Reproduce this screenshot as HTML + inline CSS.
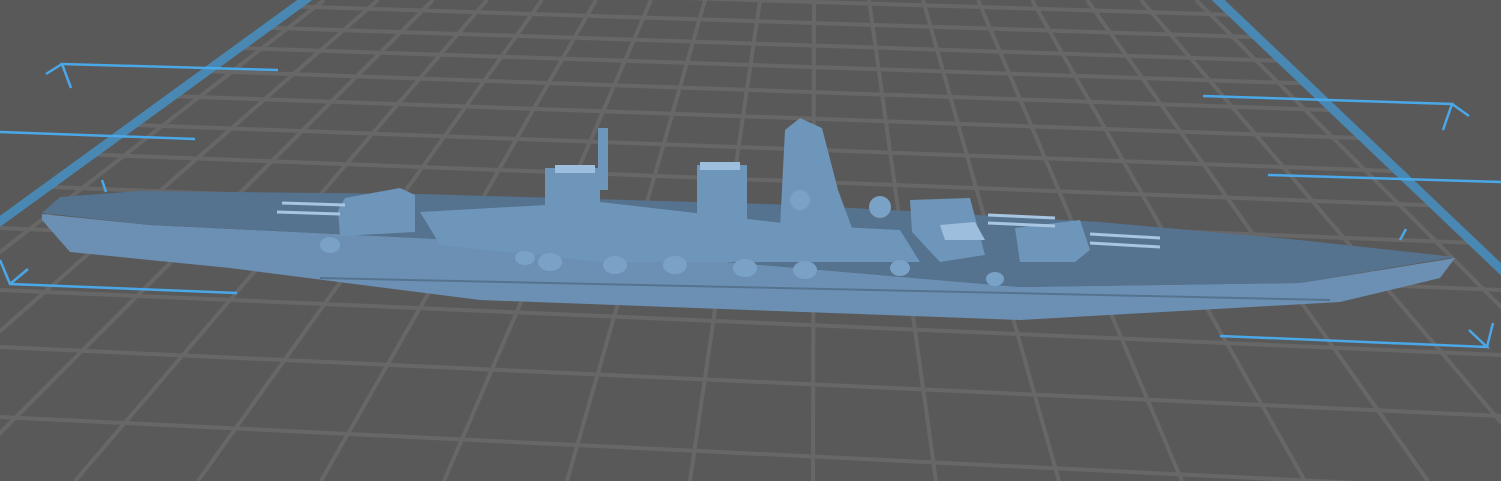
<!DOCTYPE html>
<html><head><style>html,body{margin:0;padding:0;background:#595959;}svg{display:block}</style></head><body>
<svg width="1501" height="481" viewBox="0 0 1501 481" xmlns="http://www.w3.org/2000/svg">
<defs><clipPath id="pl"><polygon points="307,0 1217,0 1501,270 1501,481 0,481 0,222"/></clipPath></defs>
<rect width="1501" height="481" fill="#595959"/>
<g clip-path="url(#pl)" stroke="#676767" stroke-width="4">
<line x1="0" y1="-23" x2="1501" y2="23"/>
<line x1="0" y1="-3" x2="1501" y2="45"/>
<line x1="0" y1="19" x2="1501" y2="68"/>
<line x1="0" y1="40" x2="1501" y2="90"/>
<line x1="0" y1="64" x2="1501" y2="116"/>
<line x1="0" y1="90" x2="1501" y2="143"/>
<line x1="0" y1="120" x2="1501" y2="175"/>
<line x1="0" y1="151" x2="1501" y2="208"/>
<line x1="0" y1="185" x2="1501" y2="244"/>
<line x1="0" y1="228" x2="1501" y2="290"/>
<line x1="0" y1="290" x2="1501" y2="355"/>
<line x1="0" y1="347" x2="1501" y2="416"/>
<line x1="0" y1="417" x2="1501" y2="490"/>
<line x1="-1155" y1="481" x2="-58" y2="0"/>
<line x1="-1032" y1="481" x2="-3" y2="0"/>
<line x1="-909" y1="481" x2="51" y2="0"/>
<line x1="-786" y1="481" x2="106" y2="0"/>
<line x1="-663" y1="481" x2="160" y2="0"/>
<line x1="-540" y1="481" x2="215" y2="0"/>
<line x1="-417" y1="481" x2="269" y2="0"/>
<line x1="-294" y1="481" x2="324" y2="0"/>
<line x1="-171" y1="481" x2="378" y2="0"/>
<line x1="-48" y1="481" x2="433" y2="0"/>
<line x1="75" y1="481" x2="487" y2="0"/>
<line x1="198" y1="481" x2="542" y2="0"/>
<line x1="321" y1="481" x2="596" y2="0"/>
<line x1="444" y1="481" x2="651" y2="0"/>
<line x1="567" y1="481" x2="705" y2="0"/>
<line x1="690" y1="481" x2="760" y2="0"/>
<line x1="813" y1="481" x2="814" y2="0"/>
<line x1="936" y1="481" x2="869" y2="0"/>
<line x1="1059" y1="481" x2="923" y2="0"/>
<line x1="1182" y1="481" x2="978" y2="0"/>
<line x1="1305" y1="481" x2="1032" y2="0"/>
<line x1="1428" y1="481" x2="1087" y2="0"/>
<line x1="1551" y1="481" x2="1141" y2="0"/>
<line x1="1674" y1="481" x2="1196" y2="0"/>
<line x1="1797" y1="481" x2="1250" y2="0"/>
<line x1="1920" y1="481" x2="1305" y2="0"/>
<line x1="2043" y1="481" x2="1359" y2="0"/>
<line x1="2166" y1="481" x2="1414" y2="0"/>
</g>
<g stroke="#4a88b4" stroke-width="9" fill="none">
<line x1="309" y1="-3" x2="-5" y2="225"/>
<line x1="1215" y1="-3" x2="1505" y2="273"/>
</g>
<g stroke="#4aa8e8" stroke-width="2.5" fill="none">
<polyline points="278,70 62,64 71,88"/><line x1="62" y1="64" x2="46" y2="74"/>
<line x1="0" y1="132" x2="195" y2="139"/>
<polyline points="0,260 10,284 237,293"/><line x1="10" y1="284" x2="28" y2="269"/>
<polyline points="1203,96 1452,104 1443,130"/><line x1="1452" y1="104" x2="1469" y2="116"/>
<line x1="1268" y1="175" x2="1501" y2="182"/>
<polyline points="1220,336 1487,347 1469,330"/><line x1="1487" y1="347" x2="1493" y2="323"/>
<line x1="102" y1="180" x2="106" y2="192"/>
<line x1="1400" y1="240" x2="1406" y2="229"/>
</g>
<!-- hull side -->
<polygon points="42,214 150,225 480,241 1020,287 1300,283 1455,258 1440,278 1340,302 1020,320 480,300 230,268 70,252 42,220" fill="#6b90b4"/>
<!-- deck -->
<polygon points="42,213 60,197 140,191 420,194 800,205 1100,222 1300,240 1455,257 1300,283 1020,287 480,241 150,225" fill="#55728f"/>
<line x1="320" y1="278" x2="1330" y2="300" stroke="#55738f" stroke-width="2"/>
<!-- superstructure -->
<g fill="#6e95ba">
<polygon points="420,212 600,202 800,225 900,230 920,262 600,262 440,245"/>
<rect x="545" y="168" width="55" height="50"/>
<rect x="697" y="165" width="50" height="60"/>
<polygon points="785,130 800,118 822,128 838,190 852,228 780,228"/>
<rect x="598" y="128" width="10" height="62"/>
<polygon points="338,210 345,198 400,188 415,195 415,232 340,236"/>
<polygon points="910,200 970,198 985,255 940,262 912,232"/>
<polygon points="1015,228 1080,220 1090,250 1075,262 1020,262"/>
<g fill="#7aa2c6">
<circle cx="800" cy="200" r="10"/><circle cx="880" cy="207" r="11"/>
<ellipse cx="330" cy="245" rx="10" ry="8"/><ellipse cx="550" cy="262" rx="12" ry="9"/>
<ellipse cx="615" cy="265" rx="12" ry="9"/><ellipse cx="675" cy="265" rx="12" ry="9"/>
<ellipse cx="745" cy="268" rx="12" ry="9"/><ellipse cx="805" cy="270" rx="12" ry="9"/>
<ellipse cx="900" cy="268" rx="10" ry="8"/><ellipse cx="525" cy="258" rx="10" ry="7"/>
<ellipse cx="995" cy="279" rx="9" ry="7"/>
</g>
</g>
<g stroke="#a8c6e2" stroke-width="3">
<line x1="282" y1="203" x2="345" y2="205"/><line x1="277" y1="212" x2="340" y2="214"/>
<line x1="988" y1="215" x2="1055" y2="218"/><line x1="988" y1="223" x2="1055" y2="226"/>
<line x1="1090" y1="234" x2="1160" y2="238"/><line x1="1090" y1="243" x2="1160" y2="247"/>
</g>
<g fill="#9dbfdd"><polygon points="940,225 975,222 985,240 945,240"/><rect x="555" y="165" width="40" height="8"/><rect x="700" y="162" width="40" height="8"/></g>
</svg>
</body></html>
